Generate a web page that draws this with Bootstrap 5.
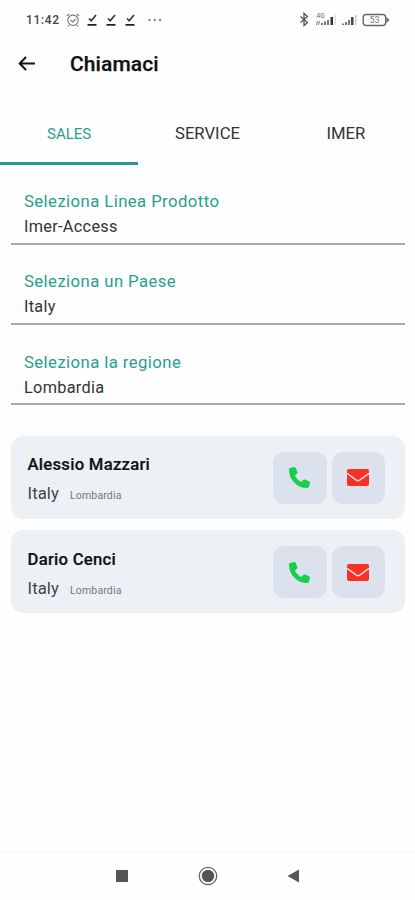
<!DOCTYPE html>
<html lang="it">
<head>
<meta charset="utf-8">
<meta name="viewport" content="width=device-width, initial-scale=1">
<title>Chiamaci</title>
<link href="https://cdn.jsdelivr.net/npm/bootstrap@5.3.0/dist/css/bootstrap.min.css" rel="stylesheet">
<style>
body{font-family:Roboto,sans-serif;color:#2a2a2a;background:#fefefe}
svg{display:block;flex:none}
.screen{height:900px;overflow:hidden}
.status{height:40px;padding:0 25px 0 26px}
.clock{font-size:12px;font-weight:500;letter-spacing:.65px;line-height:16px;width:40px;color:#444}
.topbar{height:48px;padding-left:18px}
.topbar h1{font-size:21px;font-weight:500;line-height:24px;margin-left:34px;letter-spacing:.1px;color:#111;-webkit-text-stroke:.25px #111}
.tabs{height:77px;padding-top:16px}
.tabs .nav-link{font-size:16.700px;line-height:20px;color:#333;padding:20px 0 0;border-radius:0;border-bottom:3px solid transparent}
.tabs .nav-link.active{color:#27a08f;border-color:#27988d;font-size:15px}
.fields{padding:16px 10px 0 11px}
.field-wrap{height:80.3px}
.field-box{height:63.500px;border-bottom:2px solid #a6a6a6;padding:8px 13px 0}
.field-label{font-size:16.700px;letter-spacing:.43px;line-height:25px;color:#27a08f}
.field-value{font-size:16.300px;letter-spacing:.3px;line-height:26px;color:#333}
.people{padding:14px 10px 0 11px;gap:11.500px}
.person{height:83px;border:0;border-radius:12px;background:#ecf1f5;padding:1px 20px 0 16.500px}
.person-name{font-size:16.700px;font-weight:500;letter-spacing:.25px;line-height:24px;color:#111;-webkit-text-stroke:.2px #111;margin-top:3px}
.country{font-size:16.700px;line-height:22px;letter-spacing:.1px;color:#444}
.region{font-size:10.500px;line-height:16px;letter-spacing:.15px;color:#777;margin:4px 0 0 11px}
.place{margin-top:6px}
.actions{gap:5px}
.action{width:53.500px;height:52px;border-radius:11px;background:#dce1ee;padding:0}
.softkeys{height:49px;padding-bottom:1px;border-top:1px solid #f5f5f5}
</style>
<script src="https://cdn.jsdelivr.net/npm/bootstrap@5.3.0/dist/js/bootstrap.bundle.min.js"></script>
</head>
<body>
<svg width="0" height="0" class="position-absolute">
<symbol id="phone" viewBox="0 0 512 512"><path fill="#17cf4b" d="M164.900 24.600c-7.700-18.600-28-28.500-47.400-23.200l-88 24C12.100 30.200 0 46 0 64c0 247.400 200.600 448 448 448 18 0 33.800-12.100 38.600-29.500l24-88c5.300-19.400-4.600-39.700-23.200-47.400l-96-40c-16.300-6.800-35.200-2.100-46.300 11.600L304.700 368C234.300 334.700 177.300 277.700 144 207.300l49.300-40.300c13.700-11.200 18.400-30 11.600-46.300l-40-96z"/></symbol>
<symbol id="mail" viewBox="0 0 22 17"><rect width="22" height="17" rx="2" fill="#fa3022"/><path d="M0 4.300l9.300 6.900q1.700 1.200 3.400 0L22 4.300" fill="none" stroke="#e9dfe9" stroke-width="1.500"/></symbol>
<symbol id="check" viewBox="0 0 11 13"><path d="M2.500 4.500l2.200 2.300L9.500 1" fill="none" stroke="#333" stroke-width="1.600"/><path d="M1 10.800h9" stroke="#222" stroke-width="1.800"/></symbol>
</svg>
<div class="screen d-flex flex-column">
  <div class="status d-flex align-items-center justify-content-between">
    <div class="d-flex align-items-center">
      <span class="clock">11:42</span>
      <svg width="14" height="14" viewBox="0 0 14 14" fill="none" stroke="#777" stroke-width="1.100"><circle cx="7" cy="7.300" r="5.200"/><path d="M1 3l2.300-2M13 3l-2.300-2M3 12l-1 1.500M11 12l1 1.500M4.500 7l2.200 2L9.700 6"/></svg>
      <svg class="ms-1" width="53" height="13" viewBox="0 0 53 13"><use href="#check" x="2.500" width="11" height="13"/><use href="#check" x="21.500" width="11" height="13"/><use href="#check" x="40.500" width="11" height="13"/></svg>
      <svg width="28" height="13" viewBox="0 0 28 13" fill="#888"><circle cx="12.500" cy="6" r="1.200"/><circle cx="17.800" cy="6" r="1.200"/><circle cx="23" cy="6" r="1.200"/></svg>
    </div>
    <svg width="92" height="16" viewBox="0 0 92 16">
      <path d="M2.500 4.500l7 6L6 13.500V1.500l3.500 3-7 6" fill="none" stroke="#555" stroke-width="1.300"/>
      <g fill="#777"><path d="M23 11h2v2h-2zM26 9.500h2V13h-2zM29 8h2v5h-2z"/><path fill="#333" d="M32.500 5H35v8h-2.500z"/><path fill="#ddd" d="M36.500 3H38v10h-1.500z"/><path d="M44 11.500h2V13h-2zM47 10h2v3h-2zM50 8h2v5h-2z"/><path fill="#444" d="M53 5h2.500v8H53z"/><path fill="#ccc" d="M57 3h1.500v10H57z"/><path d="M19 9l-1 4h1l1-4zM21 9l-1 4h1l1-4z"/></g>
      <text x="18.500" y="6" font-size="6.500" fill="#666">4G</text>
      <rect x="65.200" y="2.500" width="22.500" height="11" rx="3" fill="none" stroke="#666" stroke-width="1.400"/><path d="M88.500 5l3 3-3 3z" fill="#666"/>
      <text x="76.500" y="11.300" text-anchor="middle" font-size="9" fill="#777">53</text>
    </svg>
  </div>
  <header class="topbar d-flex align-items-center">
    <svg width="18" height="16" viewBox="0 0 18 16" fill="none" stroke="#111" stroke-width="2"><path d="M17 7.500H2M8 1L1.700 7.500 8 14"/></svg>
    <h1 class="mb-0">Chiamaci</h1>
  </header>
  <nav class="tabs nav nav-justified flex-nowrap">
    <a class="nav-link active" href="#">SALES</a>
    <a class="nav-link" href="#">SERVICE</a>
    <a class="nav-link" href="#">IMER</a>
  </nav>
  <main>
    <div class="fields">
      <div class="field-wrap"><div class="field-box"><div class="field-label">Seleziona Linea Prodotto</div><div class="field-value">Imer-Access</div></div></div>
      <div class="field-wrap"><div class="field-box"><div class="field-label">Seleziona un Paese</div><div class="field-value">Italy</div></div></div>
      <div class="field-wrap"><div class="field-box"><div class="field-label">Seleziona la regione</div><div class="field-value">Lombardia</div></div></div>
    </div>
    <div class="people d-flex flex-column">
      <div class="person card flex-row align-items-center justify-content-between">
        <div><div class="person-name">Alessio Mazzari</div><div class="place d-flex align-items-center"><span class="country">Italy</span><span class="region">Lombardia</span></div></div>
        <div class="actions d-flex"><a class="action btn d-flex align-items-center justify-content-center" href="#" aria-label="Telefono"><svg width="21" height="21"><use href="#phone"/></svg></a><a class="action btn d-flex align-items-center justify-content-center" href="#" aria-label="Email"><svg width="22" height="17"><use href="#mail"/></svg></a></div>
      </div>
      <div class="person card flex-row align-items-center justify-content-between">
        <div><div class="person-name">Dario Cenci</div><div class="place d-flex align-items-center"><span class="country">Italy</span><span class="region">Lombardia</span></div></div>
        <div class="actions d-flex"><a class="action btn d-flex align-items-center justify-content-center" href="#" aria-label="Telefono"><svg width="21" height="21"><use href="#phone"/></svg></a><a class="action btn d-flex align-items-center justify-content-center" href="#" aria-label="Email"><svg width="22" height="17"><use href="#mail"/></svg></a></div>
      </div>
    </div>
  </main>
  <footer class="softkeys mt-auto d-flex justify-content-center align-items-center">
    <svg width="186" height="22" viewBox="0 0 186 22" fill="#555"><path d="M1 5h12v12H1z"/><circle cx="93" cy="11" r="6.200"/><circle cx="93" cy="11" r="8.700" fill="none" stroke="#666" stroke-width="1.300"/><path d="M172.500 11L184 4.500v13z"/></svg>
  </footer>
</div>
</body>
</html>
